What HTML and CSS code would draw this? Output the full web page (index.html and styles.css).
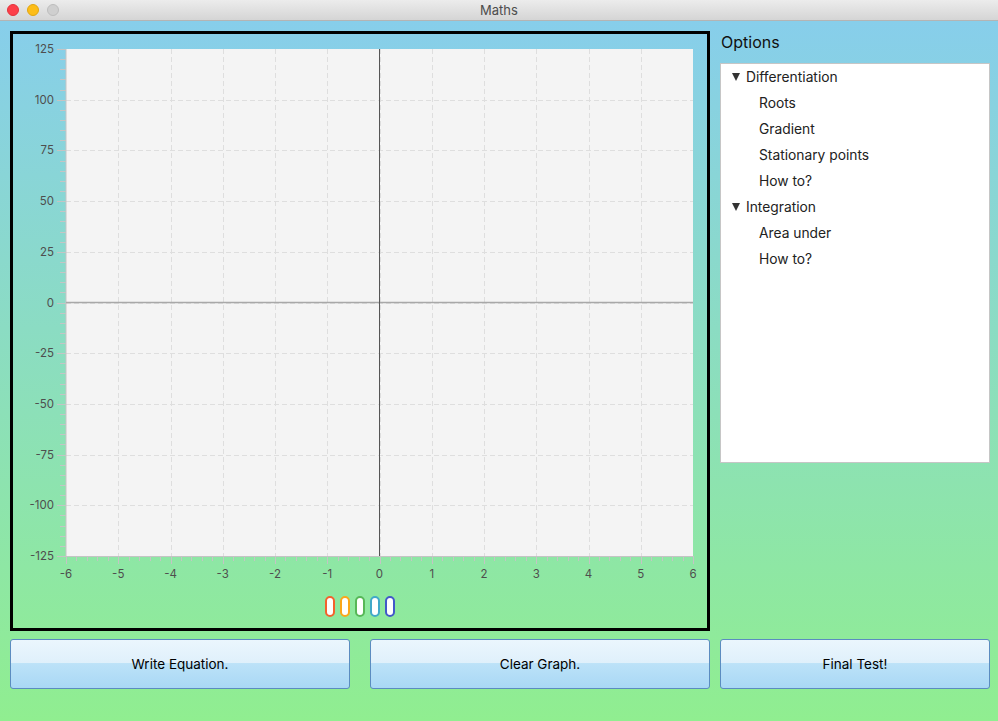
FILE: index.html
```html
<!DOCTYPE html>
<html>
<head>
<meta charset="utf-8">
<title>Maths</title>
<link rel="stylesheet" href="styles.css">
</head>
<body>
<div class="window">
  <div class="titlebar">
    <div class="lights">
      <span class="light red"></span>
      <span class="light yellow"></span>
      <span class="light grey"></span>
    </div>
    <div class="title">Maths</div>
  </div>
  <div class="content">
    <div class="chart-box">
      <svg class="chart" width="694" height="594" viewBox="0 0 694 594" xmlns="http://www.w3.org/2000/svg">
        <rect x="53" y="15" width="627" height="507" fill="#f4f4f4"/>
        <g id="grid" stroke="#dedede" stroke-width="1" stroke-dasharray="5 3"></g>
        <g id="ticks" stroke="#c4c4c4" stroke-width="1"></g>
        <line x1="53" y1="15" x2="53" y2="522" stroke="#c4c4c4" stroke-width="1"/>
        <line x1="53" y1="522.5" x2="680" y2="522.5" stroke="#c4c4c4" stroke-width="1"/>
        <line x1="53" y1="268.5" x2="680" y2="268.5" stroke="#a8a8a8" stroke-width="1.6"/>
        <line x1="366.5" y1="15" x2="366.5" y2="522" stroke="#555" stroke-width="1"/>
        <g id="ylabels" class="axis-label" text-anchor="end"></g>
        <g id="xlabels" class="axis-label" text-anchor="middle"></g>
        <g class="legend" fill="#fff" stroke-width="2">
          <rect x="313" y="563" width="8" height="19" rx="4" stroke="#f3622d"/>
          <rect x="328" y="563" width="8" height="19" rx="4" stroke="#fba71b"/>
          <rect x="343" y="563" width="8" height="19" rx="4" stroke="#57b757"/>
          <rect x="358" y="563" width="8" height="19" rx="4" stroke="#41a9c9"/>
          <rect x="373" y="563" width="8" height="19" rx="4" stroke="#4258c9"/>
        </g>
      </svg>
    </div>
    <div class="sidebar">
      <div class="options-label">Options</div>
      <div class="tree">
        <div class="row parent"><span class="arrow"></span>Differentiation</div>
        <div class="row child">Roots</div>
        <div class="row child">Gradient</div>
        <div class="row child">Stationary points</div>
        <div class="row child">How to?</div>
        <div class="row parent"><span class="arrow"></span>Integration</div>
        <div class="row child">Area under</div>
        <div class="row child">How to?</div>
      </div>
    </div>
    <div class="button-pair">
      <button class="btn">Write Equation.</button>
      <button class="btn">Clear Graph.</button>
    </div>
    <button class="btn">Final Test!</button>
  </div>
</div>
<script>
(function(){
  var ns = "http://www.w3.org/2000/svg";
  function X(v){ return 53 + (v + 6) * 52.25; }
  function Y(v){ return 15 + (125 - v) / 250 * 507; }
  function el(tag, attrs, parent){ var e=document.createElementNS(ns, tag); for (var k in attrs) e.setAttribute(k, attrs[k]); parent.appendChild(e); return e; }
  var grid=document.getElementById("grid"), ticks=document.getElementById("ticks");
  var yl=document.getElementById("ylabels"), xl=document.getElementById("xlabels");
  for (var i=-5;i<=5;i++){ var x=Math.round(X(i))+0.5; el("line",{x1:x,y1:15,x2:x,y2:522},grid); }
  for (var v=-100; v<=100; v+=25){ var y=Math.round(Y(v))+0.5; el("line",{x1:53,y1:y,x2:680,y2:y},grid); }
  for (var i=-6;i<=6;i++){
    var x=Math.round(X(i))+0.5;
    el("line",{x1:x,y1:522,x2:x,y2:530},ticks);
    var t=el("text",{x:X(i),y:544},xl); t.textContent=i;
    if(i<6){ for(var m=1;m<5;m++){ var xm=Math.round(X(i+m/5))+0.5; el("line",{x1:xm,y1:522,x2:xm,y2:527},ticks);} }
  }
  for (var v=-125; v<=125; v+=25){
    var y=Math.round(Y(v))+0.5;
    el("line",{x1:44,y1:y,x2:53,y2:y},ticks);
    var t=el("text",{x:41,y:Y(v)+4},yl); t.textContent=v;
    if(v<125){ for(var m=1;m<5;m++){ var ym=Math.round(Y(v+m*5))+0.5; el("line",{x1:47,y1:ym,x2:53,y2:ym},ticks);} }
  }
})();
</script>
</body>
</html>
```

FILE: styles.css
```css
* { box-sizing: border-box; }
html, body { margin: 0; padding: 0; }
body {
  width: 998px;
  height: 721px;
  overflow: hidden;
  font-family: Inter, "Noto Sans", "Liberation Sans", sans-serif;
  font-size: 13px;
  color: #000;
}
.window {
  width: 998px;
  height: 721px;
  display: flex;
  flex-direction: column;
}
.titlebar {
  height: 21px;
  flex: none;
  position: relative;
  background: linear-gradient(#ececec, #d5d5d5);
  border-bottom: 1px solid #b4b4b4;
  display: flex;
  align-items: center;
  justify-content: center;
}
.lights {
  position: absolute;
  left: 7px;
  top: 4px;
  display: flex;
  gap: 8px;
}
.light {
  width: 12px;
  height: 12px;
  border-radius: 50%;
  display: block;
}
.light.red { background: #fd3f49; border: 1px solid #e2333c; }
.light.yellow { background: #fdbd18; border: 1px solid #e1a610; }
.light.grey { background: #cfcfcf; border: 1px solid #bdbdbd; }
.title {
  font-size: 13px;
  color: #4d4d4d;
  line-height: 20px;
}
.content {
  flex: 1;
  background: linear-gradient(#87ceeb, #90ee90);
  padding: 10px 8px 0 10px;
  display: grid;
  grid-template-columns: 700px 270px;
  grid-template-rows: 600px 50px;
  column-gap: 10px;
  row-gap: 8px;
  align-content: start;
}
.chart-box {
  border: 3px solid #000;
  width: 700px;
  height: 600px;
}
.chart { display: block; }
.axis-label {
  font-family: Inter, "Liberation Sans", sans-serif;
  font-size: 11.5px;
  fill: #4e4e4e;
}
.sidebar {
  display: flex;
  flex-direction: column;
}
.options-label {
  font-size: 16px;
  line-height: 22px;
  height: 22px;
  margin-bottom: 10px;
  color: #111;
  padding-left: 1px;
}
.tree {
  height: 400px;
  background: #fff;
  border: 1px solid #c6c6c6;
}
.row {
  height: 26px;
  line-height: 26px;
  font-size: 13.8px;
  color: #222;
  display: flex;
  align-items: center;
}
.row.parent { padding-left: 11px; }
.row.child { padding-left: 38px; }
.arrow {
  width: 0;
  height: 0;
  border-left: 4.5px solid transparent;
  border-right: 4.5px solid transparent;
  border-top: 8px solid #333;
  margin-right: 6px;
}
.button-pair {
  display: flex;
  gap: 20px;
}
.btn {
  flex: 1;
  height: 50px;
  width: 100%;
  border: 1px solid #5b8cc0;
  border-radius: 3px;
  background: linear-gradient(#ebf6fd 0%, #dff0fb 48%, #bce2f8 49%, #a9d8f5 100%);
  font-family: Inter, "Liberation Sans", sans-serif;
  font-size: 13.5px;
  color: #000;
  padding: 0;
}
```
